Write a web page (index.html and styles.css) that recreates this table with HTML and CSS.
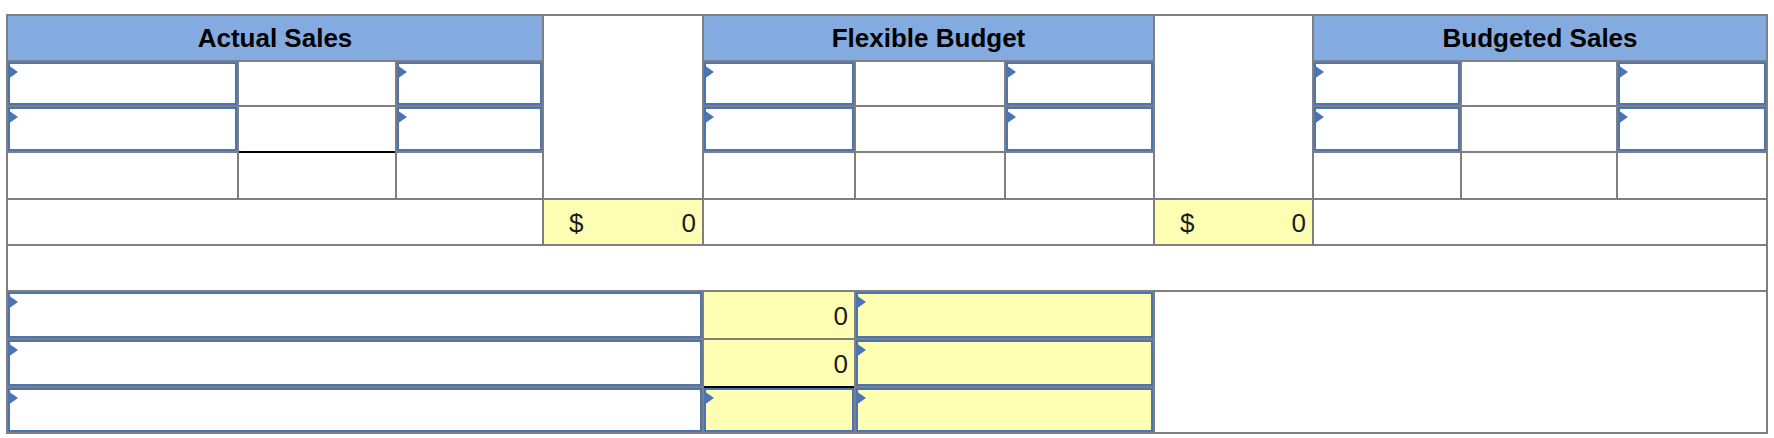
FILE: index.html
```html
<!DOCTYPE html>
<html>
<head>
<meta charset="utf-8">
<link rel="stylesheet" href="styles.css">
</head>
<body>
<div class="sheet">
  <div class="hd span3">Actual Sales</div>
  <div class="blank tall"></div>
  <div class="hd span3">Flexible Budget</div>
  <div class="blank tall"></div>
  <div class="hd span3">Budgeted Sales</div>

  <div class="inp"></div><div class="plain"></div><div class="inp"></div>
  <div class="inp"></div><div class="plain"></div><div class="inp"></div>
  <div class="inp"></div><div class="plain"></div><div class="inp"></div>

  <div class="inp"></div><div class="plain uline"></div><div class="inp"></div>
  <div class="inp"></div><div class="plain"></div><div class="inp"></div>
  <div class="inp"></div><div class="plain"></div><div class="inp"></div>

  <div class="plain"></div><div class="plain"></div><div class="plain"></div>
  <div class="plain"></div><div class="plain"></div><div class="plain"></div>
  <div class="plain"></div><div class="plain"></div><div class="plain"></div>

  <div class="plain span3"></div>
  <div class="total"><span>$</span><span>0</span></div>
  <div class="plain span3"></div>
  <div class="total"><span>$</span><span>0</span></div>
  <div class="plain span3"></div>

  <div class="plain spanall"></div>

  <div class="inp span4"></div>
  <div class="num">0</div>
  <div class="inp yellow span2"></div>
  <div class="plain side"></div>

  <div class="inp span4"></div>
  <div class="num uline">0</div>
  <div class="inp yellow span2"></div>

  <div class="inp span4"></div>
  <div class="inp yellow"></div>
  <div class="inp yellow span2"></div>
</div>
</body>
</html>
```

FILE: styles.css
```css
html, body {
  margin: 0;
  padding: 0;
  background: #ffffff;
}

body {
  font-family: "Liberation Sans", Arial, sans-serif;
}

.sheet {
  display: inline-grid;
  margin: 14px 0 0 6px;
  padding: 2px;
  gap: 2px;
  background: #7f7f7f;
  grid-template-columns: 229px 156px 145px 158px 150px 148px 147px 157px 146px 154px 148px;
  grid-template-rows: 44px 43px 44px 45px 44px 44px 46px 46px 44px;
}

.sheet > div {
  background: #ffffff;
  box-sizing: border-box;
  min-width: 0;
}

.span2 { grid-column: span 2; }
.span3 { grid-column: span 3; }
.span4 { grid-column: span 4; }
.spanall { grid-column: span 11; }
.tall { grid-row: span 4; }
.side { grid-column: span 4; grid-row: span 3; }

.sheet > .hd {
  background: #84abdf;
  color: #000000;
  font-weight: bold;
  font-size: 26px;
  display: flex;
  align-items: center;
  justify-content: center;
  padding-top: 1px;
}

.sheet > .inp {
  position: relative;
  border: 2px solid #4a74b6;
}

.sheet > .inp::before {
  content: "";
  position: absolute;
  left: -2px;
  top: 1px;
  width: 0;
  height: 0;
  border-left: 10px solid #4a74b6;
  border-top: 7px solid transparent;
  border-bottom: 7px solid transparent;
}

.sheet > .yellow,
.sheet > .total,
.sheet > .num {
  background: #ffffb4;
}

.total {
  display: flex;
  align-items: center;
  justify-content: space-between;
  padding: 2px 6px 0 25px;
  font-size: 26px;
  color: #1a1a1a;
}

.num {
  display: flex;
  align-items: center;
  justify-content: flex-end;
  padding: 2px 6px 0 0;
  font-size: 26px;
  color: #1a1a1a;
}

.uline {
  box-shadow: 0 2px 0 0 #000000;
}
```
